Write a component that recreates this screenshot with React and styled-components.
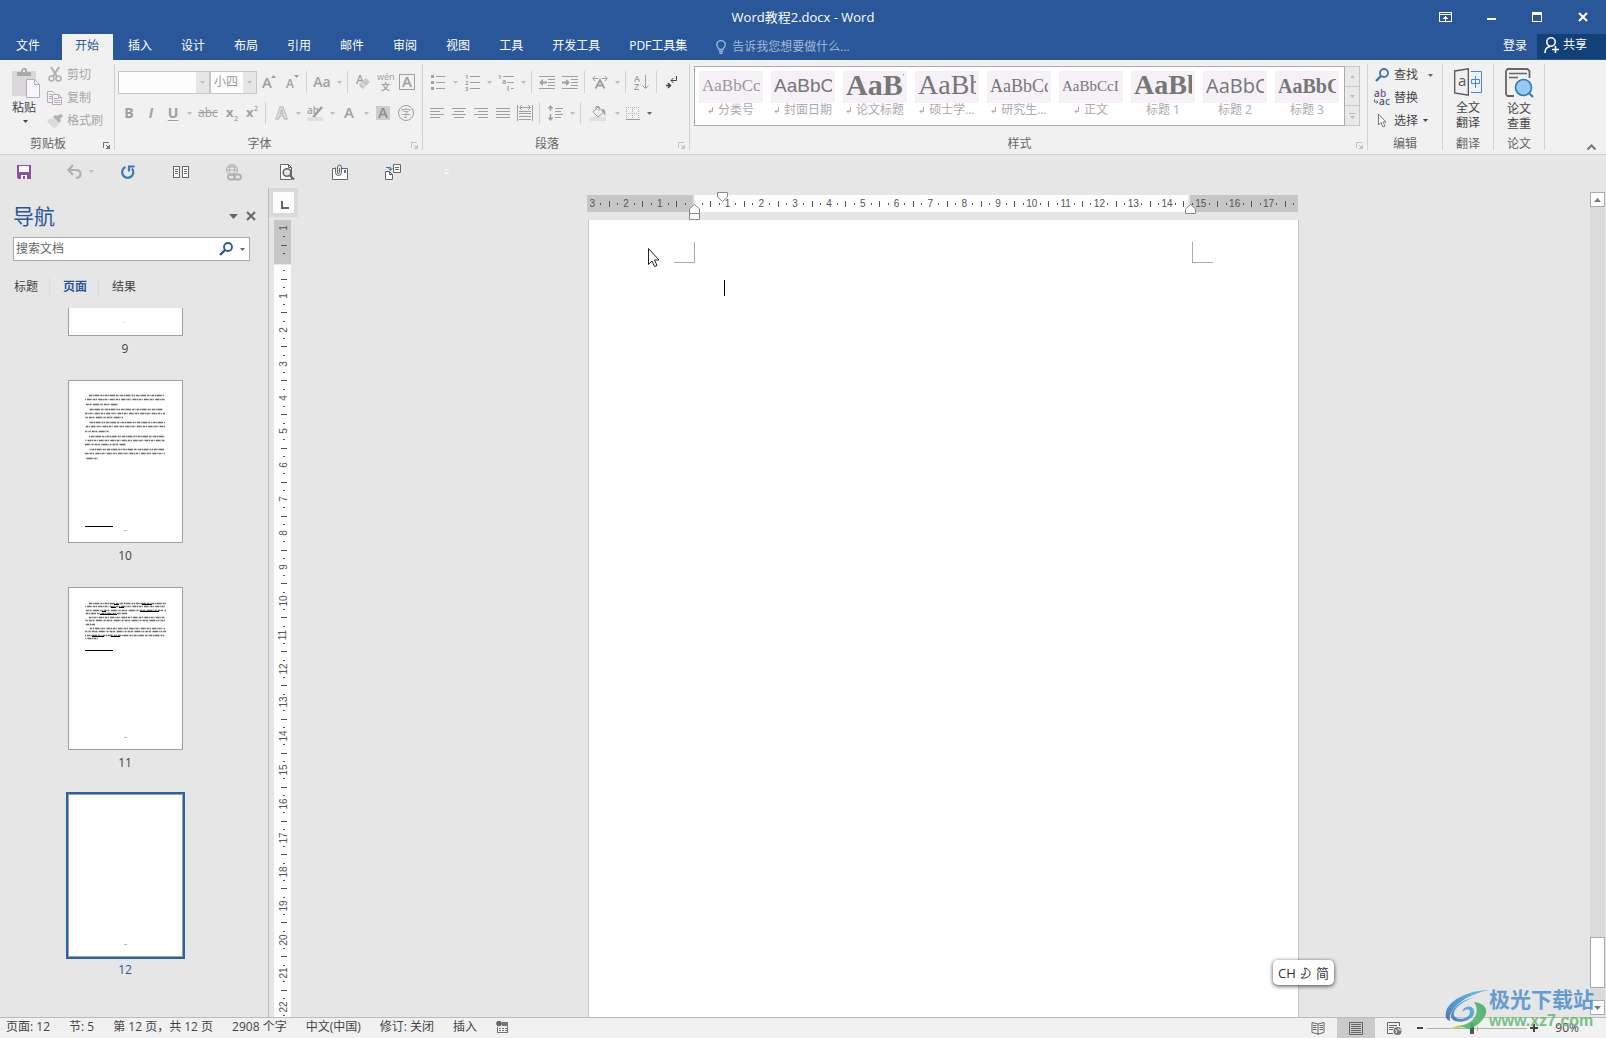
import React, { useState } from "react";
import styled, { createGlobalStyle } from "styled-components";

const GlobalStyle = createGlobalStyle`
  * {
    box-sizing: border-box;
  }

  body {
    margin: 0;
    background: #e6e6e6;
    color: #444;
    font-family: "Open Sans", "Noto Sans CJK SC", sans-serif;
    font-size: 12px;
    line-height: 16px;
  }

  button, input, select {
    margin: 0;
    padding: 0;
    border: none;
    background: none;
    color: inherit;
    font: inherit;
    outline: none;
  }

  svg {
    display: block;
    flex: none;
    overflow: visible;
  }
`;

const Window = styled.div`
  position: relative;
  display: flex;
  flex-direction: column;
  height: 100vh;
  overflow: hidden;
`;

/* ---------- title bar ---------- */

const TitleBar = styled.header`
  display: grid;
  grid-template-columns: 1fr auto 1fr;
  align-items: center;
  height: 34px;
  background: #2a579a;
  color: #fff;
`;

const Title = styled.h1`
  grid-column: 2;
  margin: 0;
  font-size: 13px;
  font-weight: 400;
`;

const WindowButtons = styled.div`
  display: flex;
  justify-content: flex-end;
`;

const WindowButton = styled.button`
  display: flex;
  align-items: center;
  justify-content: center;
  width: 46px;
  height: 32px;
`;

const TabBar = styled.nav`
  display: flex;
  height: 26px;
  background: #2a579a;
  color: #fff;
`;

const FileTab = styled.button`
  width: 62px;
  padding: 0 22px 2px 16px;
  text-align: left;
`;

const Tab = styled.button`
  padding: 0 14px 2px 13px;
  margin-right: 2px;
  white-space: nowrap;
  background: ${(props) => (props.$active ? "#f1f1f1" : "transparent")};
  color: ${(props) => (props.$active ? "#2a579a" : "#fff")};
`;

const TellMe = styled.label`
  display: flex;
  flex: 1;
  align-items: center;
  gap: 6px;
  padding-left: 13px;
`;

const TellMeInput = styled.input`
  flex: 1;
  min-width: 120px;

  &::placeholder {
    color: #a3b8d9;
    opacity: 1;
  }
`;

const LoginLink = styled.a`
  padding: 4px 10px 0 0;
  color: #fff;
  text-decoration: none;
`;

const ShareButton = styled.button`
  display: flex;
  align-items: center;
  gap: 4px;
  width: 69px;
  height: 25px;
  padding: 0 7px 3px;
  background: #124078;
`;

/* ---------- ribbon ---------- */

const Ribbon = styled.section`
  display: flex;
  height: 95px;
  padding: 4px 0;
  background: #f1f1f1;
  border-bottom: 1px solid #d2d2d2;
`;

const Group = styled.div`
  display: flex;
  flex: ${(props) => (props.$grow ? "1 1 0" : "none")};
  flex-direction: column;
  width: ${(props) => props.$width}px;
  min-width: 0;
  border-right: 1px solid #d2d2d2;
`;

const GroupBody = styled.div`
  display: flex;
  flex: 1;
  min-height: 0;
`;

const GroupFooter = styled.div`
  display: flex;
  align-items: center;
  height: 12px;
  color: #666;
`;

const GroupName = styled.span`
  flex: 1;
  text-align: center;
`;

const Launcher = styled.button`
  width: 18px;
  padding: 2px 0 0 7px;
  color: ${(props) => (props.$dim ? "#c3c3c3" : "#777")};
`;

const RibbonTail = styled.div`
  display: flex;
  align-items: flex-end;
  justify-content: flex-end;
  width: 61px;
  padding-right: 10px;
`;

const ToolRows = styled.div`
  display: flex;
  flex-direction: column;
  gap: 7px;
  padding: 6px 0 0 3px;
`;

const ToolRow = styled.div`
  display: flex;
  align-items: center;
  height: 24px;
`;

const ToolButton = styled.button`
  display: flex;
  align-items: center;
  justify-content: center;
  width: ${(props) => props.$width || 22}px;
  height: 24px;
  color: #a0a0a0;
`;

const Letter = styled.span`
  font-size: 14px;
  font-weight: ${(props) => (props.$light ? 600 : 700)};
  font-style: ${(props) => (props.$italic ? "italic" : "normal")};
  text-decoration: ${(props) => (props.$underline ? "underline" : "none")};
  text-underline-offset: 2px;
`;

const CaretButton = styled.button`
  display: flex;
  align-items: center;
  justify-content: center;
  width: 10px;
  height: 22px;
  color: ${(props) => (props.$dark ? "#666" : "#bdbdbd")};
`;

const Divider = styled.span`
  width: 1px;
  height: 22px;
  margin: 0 3px;
  background: #d2d2d2;
`;

const SelectBox = styled.span`
  position: relative;
  width: ${(props) => props.$width}px;
  height: 23px;

  svg {
    position: absolute;
    right: 5px;
    top: 10px;
    color: #bdbdbd;
    pointer-events: none;
  }
`;

const Select = styled.select`
  width: 100%;
  height: 100%;
  padding: 0 16px 0 3px;
  appearance: none;
  border: 1px solid #c6c6c6;
  border-radius: 0;
  background: linear-gradient(to left, #e6e6e6 13px, #fdfdfd 13px);
  color: #999;
`;

const PasteButton = styled.button`
  display: flex;
  flex-direction: column;
  align-items: center;
  width: 47px;
  padding: 4px 0 0 4px;
  color: #444;
`;

const PasteLabel = styled.span`
  margin: 2px 3px 4px 0;
`;

const CommandList = styled.div`
  display: flex;
  flex-direction: column;
`;

const EditList = styled(CommandList)`
  padding-left: 6px;
`;

const Command = styled.button`
  display: flex;
  align-items: center;
  gap: 5px;
  height: 23px;
  padding-bottom: 2px;
  color: ${(props) => (props.$dim ? "#a6a6a6" : "#444")};
  white-space: nowrap;
`;

const CommandRow = styled.div`
  display: flex;
  align-items: center;
  gap: 7px;
  height: 23px;
`;

const CommandIcon = styled.span`
  display: flex;
  justify-content: center;
  width: 15px;
`;

const BigButton = styled.button`
  display: flex;
  flex-direction: column;
  align-items: center;
  width: 100%;
  padding-top: 4px;
  line-height: 15px;

  svg {
    margin-bottom: 4px;
  }
`;

const GalleryWrap = styled.div`
  display: flex;
  flex: 1;
  height: 60px;
  margin: 2px 7px 0 4px;
  min-width: 0;
`;

const Gallery = styled.div`
  display: flex;
  flex: 1;
  min-width: 0;
  overflow: hidden;
  background: #fff;
  border: 1px solid #ababab;
`;

const StyleCard = styled.button`
  display: flex;
  flex: none;
  flex-direction: column;
  width: 72px;
  padding: 4px 4px 0;
`;

const Preview = styled.span`
  display: block;
  width: 64px;
  height: 32px;
  padding: 0 3px;
  background: #f5f1f7;
`;

const PreviewText = styled.span`
  display: block;
  overflow: hidden;
  color: ${(props) => (props.$light ? "#999" : "#777")};
  font-family: ${(props) => props.$family || '"Liberation Serif", serif'};
  font-size: ${(props) => props.$size}px;
  font-weight: ${(props) => props.$weight || 400};
  line-height: ${(props) => (props.$size > 24 ? 28 : 30)}px;
  text-align: left;
  white-space: nowrap;
`;

const StyleName = styled.span`
  display: flex;
  align-items: center;
  justify-content: center;
  gap: 4px;
  width: 64px;
  line-height: 14px;
  color: #ababab;
  white-space: nowrap;
`;

const GalleryScroll = styled.div`
  display: flex;
  flex-direction: column;
  width: 15px;
  border: 1px solid #c6c6c6;
  border-left: none;
`;

const GalleryScrollButton = styled.button`
  display: flex;
  flex: 1;
  align-items: center;
  justify-content: center;
  background: #e9e9e9;
  color: #bdbdbd;

  & + & {
    border-top: 1px solid #c6c6c6;
  }
`;

/* ---------- quick access ---------- */

const QuickAccess = styled.div`
  display: flex;
  align-items: center;
  gap: 29px;
  height: 33px;
  padding: 1px 0 0 12px;
`;

const QuickButton = styled.button`
  display: flex;
  align-items: center;
  justify-content: center;
  width: 24px;
  height: 24px;
  color: ${(props) => (props.$dim ? "#b0b0b0" : "#666")};
`;

const QuickPair = styled.div`
  display: flex;
  margin: 0 -9px 0 -3px;
`;

/* ---------- work area ---------- */

const Workspace = styled.main`
  display: flex;
  flex: 1;
  min-height: 0;
`;

const NavPane = styled.aside`
  display: flex;
  flex-direction: column;
  width: 269px;
  border-right: 1px solid #bababa;
`;

const NavHeader = styled.div`
  display: flex;
  align-items: center;
  gap: 8px;
  height: 49px;
  padding: 7px 12px 0 13px;
`;

const NavTitle = styled.h2`
  flex: 1;
  margin: 0;
  color: #2a579a;
  font-size: 21px;
  font-weight: 400;
  line-height: 28px;
`;

const SearchBox = styled.div`
  display: flex;
  align-items: center;
  gap: 4px;
  height: 24px;
  margin: 0 18px 0 13px;
  padding: 0 2px;
  background: #fff;
  border: 1px solid #ababab;
`;

const SearchInput = styled.input`
  flex: 1;
  min-width: 0;

  &::placeholder {
    color: #666;
    opacity: 1;
  }
`;

const NavTabs = styled.div`
  display: flex;
  padding: 16px 0 11px 1px;
`;

const NavTab = styled.button`
  height: 20px;
  padding: 0 11px 0 13px;
  border-right: 1px solid #dcdcdc;
  color: ${(props) => (props.$active ? "#2a579a" : "#444")};
  font-weight: ${(props) => (props.$active ? 700 : 400)};

  &:last-child {
    border-right: none;
  }
`;

const ThumbList = styled.div`
  flex: 1;
  min-height: 0;
  overflow: hidden;
  padding-right: 18px;
`;

const Thumb = styled.button`
  display: block;
  width: 100%;
  color: ${(props) => (props.$selected ? "#2a579a" : "#444")};

  svg {
    margin: 0 auto;
    background: #fff;
    border: 1px solid #9aa1a9;
    border-top-width: ${(props) => (props.$cut ? 0 : 1)}px;
    outline: ${(props) => (props.$selected ? "2px solid #2a63a0" : "none")};
  }
`;

const ThumbNumber = styled.span`
  display: block;
  height: 44px;
  line-height: 25px;
`;

const RulerColumn = styled.div`
  display: flex;
  flex-direction: column;
  width: 29px;
`;

const TabStop = styled.button`
  display: flex;
  align-items: center;
  justify-content: center;
  width: 29px;
  height: 29px;
  margin-bottom: 3px;
  padding: 4px 0 0 2px;
  background: #fdfdfd;
  border: 4px solid #d9d9d9;
`;

const VerticalRuler = styled.div`
  display: flex;
  flex: 1;
  flex-direction: column;
  width: 17px;
  min-height: 0;
  margin-left: 5px;
  padding: 4px 0 0 2px;
  overflow: hidden;
  background: linear-gradient(#c6c6c6 44px, #e6e6e6 44px, #e6e6e6 45px, #fff 45px);
`;

const VerticalScale = styled.div`
  display: flex;
  flex: 1;
  flex-direction: column;
  margin-bottom: -3px;
`;

const DocColumn = styled.div`
  display: flex;
  flex: 1;
  flex-direction: column;
  align-items: center;
  min-width: 0;
`;

const RulerRow = styled.div`
  width: 713px;
  height: 32px;
  padding: 7px 2px 0 0;
`;

const HorizontalRuler = styled.div`
  position: relative;
  display: flex;
  height: 17px;
  padding-left: 1px;
  background: linear-gradient(
    to right,
    #c6c6c6 106px,
    #e6e6e6 106px,
    #e6e6e6 108px,
    #fff 108px,
    #fff calc(100% - 110px),
    #e6e6e6 calc(100% - 110px),
    #e6e6e6 calc(100% - 108px),
    #c6c6c6 calc(100% - 108px)
  );
`;

const Unit = styled.div`
  display: flex;
  flex: ${(props) => (props.$last ? 2 : 4)} 1 0;
  flex-direction: ${(props) => (props.$vertical ? "column" : "row")};
  min-width: 0;
  min-height: 0;
`;

const Mark = styled.span`
  display: flex;
  flex: 1 1 0;
  align-items: center;
  justify-content: center;
  min-width: 0;
  min-height: 0;
  color: #555;
  font-family: "Liberation Sans", sans-serif;
  font-size: 10px;
  line-height: 8px;
`;

const Digits = styled.span`
  flex: none;
  transform: ${(props) => (props.$vertical ? "rotate(-90deg)" : "none")};
`;

const Tick = styled.i`
  flex: none;
  width: ${(props) => (props.$vertical ? props.$length : 1)}px;
  height: ${(props) => (props.$vertical ? 1 : props.$length)}px;
  background: #555;
`;

const Marker = styled.svg`
  position: absolute;
  left: ${(props) => props.$left}px;
  top: ${(props) => props.$top}px;
`;

const Page = styled.article`
  position: relative;
  flex: 1;
  width: 711px;
  background: #fff;
  border: solid #c6c6c6;
  border-width: 0 1px;
`;

const PageCorners = styled.div`
  display: flex;
  justify-content: space-between;
  padding: 22px 85px 0;
`;

const Corner = styled.span`
  width: 21px;
  height: 21px;
  border: solid #ababab;
  border-width: ${(props) => (props.$right ? "0 0 1px 1px" : "0 1px 1px 0")};
`;

const TextCaret = styled.div`
  width: 1px;
  height: 16px;
  margin: 17px 0 0 135px;
  background: #000;
`;

const Pointer = styled.svg`
  position: absolute;
  left: 58px;
  top: 27px;
`;

const ScrollBar = styled.div`
  display: flex;
  flex-direction: column;
  width: 17px;
  padding: 4px 1px 2px;
`;

const ScrollArrow = styled.button`
  display: flex;
  align-items: center;
  justify-content: center;
  height: 15px;
  background: #fff;
  border: 1px solid #ababab;
  color: #777;
`;

const ScrollTrack = styled.div`
  display: flex;
  flex: 1;
  flex-direction: column;
  justify-content: flex-end;
  padding-bottom: 12px;
  background: #dbdbdb;
`;

const ScrollThumb = styled.div`
  height: 51px;
  background: #fff;
  border: 1px solid #ababab;
`;

/* ---------- status bar ---------- */

const StatusBar = styled.footer`
  display: flex;
  align-items: stretch;
  justify-content: space-between;
  height: 21px;
  background: #f1f1f1;
  border-top: 1px solid #bdbdbd;
`;

const StatusInfo = styled.div`
  display: flex;
  align-items: center;
  gap: 19px;
  padding: 0 0 2px 6px;
  white-space: nowrap;
`;

const StatusRight = styled.div`
  display: flex;
  align-items: center;
  padding-right: 27px;
`;

const ViewButton = styled.button`
  display: flex;
  align-items: center;
  justify-content: center;
  width: 38px;
  height: 20px;
  background: ${(props) => (props.$active ? "#cacaca" : "transparent")};
`;

const ZoomButton = styled.button`
  display: flex;
  align-items: center;
  justify-content: center;
  width: 14px;
  height: 20px;
`;

const ZoomSlider = styled.input`
  width: 100px;
  height: 20px;
  appearance: none;
  background: linear-gradient(#b0b0b0, #b0b0b0) center / 100% 1px no-repeat,
    linear-gradient(#b0b0b0, #b0b0b0) center / 1px 5px no-repeat;

  &::-webkit-slider-thumb {
    appearance: none;
    width: 4px;
    height: 11px;
    background: #555;
  }
`;

const ZoomValue = styled.span`
  width: 38px;
  text-align: right;
`;

/* ---------- floating items ---------- */

const ImeBadge = styled.div`
  position: absolute;
  right: 272px;
  bottom: 53px;
  display: flex;
  align-items: center;
  justify-content: space-between;
  width: 61px;
  height: 25px;
  padding: 0 5px;
  background: #fff;
  border-radius: 5px;
  box-shadow: 0 1px 4px rgba(0, 0, 0, 0.75);
  color: #333;
  font-size: 13px;
`;

const SiteMark = styled.div`
  position: absolute;
  right: 12px;
  bottom: 7px;
  display: flex;
  align-items: center;
  opacity: 0.9;
  pointer-events: none;
`;

const SiteText = styled.div`
  display: flex;
  flex-direction: column;
  margin-left: -4px;
  white-space: nowrap;
`;

const SiteName = styled.strong`
  color: #5793cf;
  font-size: 21px;
  line-height: 23px;
`;

const SiteUrl = styled.strong`
  color: #69bd7c;
  font-family: "Liberation Sans", sans-serif;
  font-size: 16px;
  line-height: 20px;
`;

/* ---------- icons ---------- */

const Icon = ({ w = 16, h = 16, children, ...rest }) => (
  <svg
    width={w}
    height={h}
    viewBox={`0 0 ${w} ${h}`}
    fill="none"
    stroke="currentColor"
    aria-hidden="true"
    {...rest}
  >
    {children}
  </svg>
);

const Caret = () => (
  <Icon w={5} h={3} stroke="none">
    <path d="M0 0h5L2.500 3z" fill="currentColor" />
  </Icon>
);

const UpCaret = () => (
  <Icon w={5} h={3} stroke="none">
    <path d="M0 3h5L2.500 0z" fill="currentColor" />
  </Icon>
);

const LauncherIcon = () => (
  <Icon w={7} h={7} shapeRendering="crispEdges">
    <path d="M.5 6V.5H6" />
    <path d="M3 3l3 3M6.500 3v3.500H3" />
    <path d="M4 4h3v3H4z" fill="currentColor" stroke="none" />
  </Icon>
);

const ReturnMark = () => (
  <Icon w={6} h={7}>
    <path d="M4.500 0v4.500H1M3 2.500L1 4.500l2 2" />
  </Icon>
);

const Magnifier = ({ color = "#3f74b5" }) => (
  <Icon w={14} h={14} stroke={color}>
    <circle cx="9" cy="5" r="4" strokeWidth="1.800" />
    <path d="M6 8L1 13" strokeWidth="2.400" />
  </Icon>
);

// horizontal rules given as [x1, x2, y]
const Lines = ({ rows, w = 16, h = 16, children }) => (
  <Icon w={w} h={h} shapeRendering="crispEdges">
    {rows.map(([x1, x2, y]) => (
      <path key={`${x1}-${y}`} d={`M${x1} ${y}.5H${x2}`} />
    ))}
    {children}
  </Icon>
);

const SmallText = ({ x, y, size = 6, children, ...rest }) => (
  <text
    x={x}
    y={y}
    fontSize={size}
    fontFamily="Open Sans, Noto Sans CJK SC, sans-serif"
    fill="currentColor"
    stroke="none"
    {...rest}
  >
    {children}
  </text>
);

const PasteIcon = () => (
  <Icon w={28} h={30} stroke="none">
    <rect y="3" width="24" height="25" rx="1" fill="#dbd6dc" />
    <path d="M5 4h4V1.500h1L11 0h3l1 1.500V4h4v4H5z" fill="#a9a9a9" />
    <rect x="11" y="2" width="2" height="2" fill="#f1f1f1" />
    <path d="M14.500 11.500h8l5 5v13h-13z" fill="#f8f5fa" stroke="#b4adb7" />
    <path d="M22.500 11.500v5h5" stroke="#b4adb7" />
  </Icon>
);

const CutIcon = () => (
  <Icon w={14} h={15} stroke="#b0b0b0">
    <path d="M3 0l6 9.500M11 0L5 9.500" strokeWidth="2" />
    <circle cx="3.500" cy="11.500" r="2.500" strokeWidth="1.500" />
    <circle cx="10.500" cy="11.500" r="2.500" strokeWidth="1.500" />
  </Icon>
);

const CopyIcon = () => (
  <Icon w={15} h={14} stroke="#b4adb7">
    <path d="M5 11.500H.5V.5H6l2 2M2 3.500h3M2 5.500h3M2 7.500h3" />
    <path d="M5.500 3.500h6l3 3v7h-9z" fill="#f8f5fa" />
    <path d="M11.500 3.500v3h3M7 7.500h5M7 9.500h6M7 11.500h6" />
  </Icon>
);

const BrushIcon = () => (
  <Icon w={16} h={14} stroke="none">
    <path d="M10 2l4-2 2 2-3 3 1 2-2 2-6-6 2-2z" fill="#b0b0b0" />
    <path d="M0 6l6-2 6 6-4 4-3-1-1-2-2-1z" fill="#ddd8de" />
  </Icon>
);

const GrowIcon = () => (
  <Icon w={14} h={16}>
    <SmallText x="0" y="14" size="15" fontWeight="600">A</SmallText>
    <path d="M9 4l2.500-3L14 4z" fill="currentColor" stroke="none" />
  </Icon>
);

const ShrinkIcon = () => (
  <Icon w={13} h={16}>
    <SmallText x="0" y="14" size="12" fontWeight="600">A</SmallText>
    <path d="M8 1h5l-2.500 3z" fill="currentColor" stroke="none" />
  </Icon>
);

const EraserIcon = () => (
  <Icon w={16} h={16}>
    <SmallText x="1" y="10" size="12" fontWeight="600">A</SmallText>
    <path d="M4 10l7-6 4 4-7 7-3-2z" fill="#c9c9c9" stroke="none" />
    <path d="M6 8.500l4.500 4.500" stroke="#f1f1f1" />
  </Icon>
);

const PinyinIcon = () => (
  <Icon w={18} h={18}>
    <SmallText x="0" y="7" size="9">wén</SmallText>
    <SmallText x="4" y="17" size="9" fontWeight="600">文</SmallText>
  </Icon>
);

const BoxedA = () => (
  <Icon w={16} h={16} shapeRendering="crispEdges">
    <rect x=".5" y=".5" width="15" height="15" />
    <SmallText x="3" y="13" size="15" fontWeight="600">A</SmallText>
  </Icon>
);

const ShadedA = () => (
  <Icon w={14} h={14}>
    <rect width="14" height="14" fill="#cdcdcd" stroke="none" />
    <SmallText x="2" y="12" size="15" fontWeight="600" fill="#8f8f8f">A</SmallText>
  </Icon>
);

const CircledChar = () => (
  <Icon w={16} h={16}>
    <circle cx="8" cy="8" r="7.500" />
    <SmallText x="3" y="12" size="10">字</SmallText>
  </Icon>
);

const OutlineA = () => (
  <Icon w={13} h={15}>
    <SmallText x="1" y="13" size="16" fontWeight="700" fill="#f1f1f1" stroke="#b5b5b5">
      A
    </SmallText>
  </Icon>
);

const HighlightIcon = () => (
  <Icon w={16} h={16}>
    <SmallText x="0" y="9" size="10" fontWeight="600">ab</SmallText>
    <path d="M15 2L8 10" strokeWidth="2.500" />
    <path d="M8 8l-3 4h4z" fill="currentColor" stroke="none" />
    <rect y="12" width="16" height="4" fill="#e3dde4" stroke="none" />
  </Icon>
);

const BulletsIcon = () => (
  <Lines w={14} h={15} rows={[[5, 14, 1], [5, 14, 7], [5, 14, 13]]}>
    <path d="M0 0h3v3H0zM0 6h3v3H0zM0 12h3v3H0z" fill="currentColor" stroke="none" />
  </Lines>
);

const NumbersIcon = () => (
  <Lines w={15} h={17} rows={[[5, 15, 2], [5, 15, 8], [5, 15, 14]]}>
    <SmallText x="0" y="5" size="6" fontWeight="700">1</SmallText>
    <SmallText x="0" y="11" size="6" fontWeight="700">2</SmallText>
    <SmallText x="0" y="17" size="6" fontWeight="700">3</SmallText>
  </Lines>
);

const MultilevelIcon = () => (
  <Lines w={16} h={17} rows={[[5, 16, 2], [9, 16, 8], [13, 16, 14]]}>
    <SmallText x="0" y="5" size="6" fontWeight="700">1</SmallText>
    <SmallText x="4" y="10" size="7" fontWeight="700">a</SmallText>
    <SmallText x="9" y="17" size="7" fontWeight="700">i</SmallText>
  </Lines>
);

const IndentIcon = ({ out }) => (
  <Lines
    w={16}
    h={13}
    rows={[[0, 16, 0], [9, 16, 3], [9, 16, 6], [9, 16, 9], [0, 16, 12]]}
  >
    <path
      d={out ? "M0 6.500L4 3v2.500h4v2H4V10z" : "M8 6.500L4 3v2.500H0v2h4V10z"}
      fill="currentColor"
      stroke="none"
      shapeRendering="auto"
    />
  </Lines>
);

const CharScaleIcon = () => (
  <Icon w={16} h={14}>
    <path d="M3.500 13.500L8 5l4.500 8.500M5 10.500h6" strokeWidth="1.800" />
    <path d="M1 3.500h5M3 1L.8 3.500 3 6M10 3.500h5M13 1l2.200 2.500L13 6" />
  </Icon>
);

const SortIcon = () => (
  <Icon w={15} h={17}>
    <SmallText x="0" y="8" size="9" fontWeight="600">A</SmallText>
    <SmallText x="0" y="16" size="9" fontWeight="600">Z</SmallText>
    <path d="M11.500 1v13M8.500 11.500l3 3 3-3" />
  </Icon>
);

const MarksIcon = () => (
  <Icon w={12} h={13} stroke="#444">
    <path d="M10.500 0v4.500H5M7.500 2L5 4.500 7.500 7" />
    <path d="M0 9.500h4M2 7l2.500 2.500L2 12" strokeWidth="1.500" />
  </Icon>
);

const alignRows = {
  左对齐: [[0, 14, 1], [0, 10, 4], [0, 14, 7], [0, 10, 10]],
  居中: [[0, 14, 1], [2, 12, 4], [0, 14, 7], [2, 12, 10]],
  右对齐: [[0, 14, 1], [4, 14, 4], [0, 14, 7], [4, 14, 10]],
  两端对齐: [[0, 14, 1], [0, 14, 4], [0, 14, 7], [0, 14, 10]],
};

const DistributeIcon = () => (
  <Lines w={16} h={16} rows={[[2, 14, 6], [2, 14, 8], [2, 14, 11], [2, 14, 14]]}>
    <path d="M.5 0v16M15.500 0v16" />
    <path d="M3 2.500h10M5 0L2.500 2.500 5 5M11 0l2.500 2.500L11 5" shapeRendering="auto" />
  </Lines>
);

const LineSpaceIcon = () => (
  <Lines w={15} h={16} rows={[[7, 15, 3], [7, 13, 6], [7, 15, 9], [7, 13, 12]]}>
    <path
      d="M2.500 1v5M.5 3.500l2-2.500 2 2.500M2.500 9v6M.5 12.500l2 2.500 2-2.500"
      strokeWidth="1.400"
      shapeRendering="auto"
    />
  </Lines>
);

const BucketIcon = () => (
  <Icon w={16} h={16}>
    <path d="M3 7l5-5 6 5-6 5z" />
    <path d="M6 5V1.500h3V6" />
    <path d="M12 4c3 0 4 3 3 7-1-2-2-4-3-4z" fill="currentColor" stroke="none" />
    <rect y="12" width="16" height="4" fill="#e3dde4" stroke="none" />
  </Icon>
);

const BordersIcon = () => (
  <Icon w={14} h={13} shapeRendering="crispEdges" stroke="#b9adbb">
    <path d="M0 .5h13M0 6.500h13M.5 0v12M6.500 0v12M12.500 0v12" strokeDasharray="1 1" />
    <path d="M0 12.500h14" stroke="#999" />
  </Icon>
);

const ReplaceIcon = () => (
  <Icon w={16} h={16}>
    <SmallText x="0" y="7" size="10" fontWeight="600" fill="#555">a</SmallText>
    <SmallText x="6" y="7" size="10" fontWeight="600" fill="#8a50a8">b</SmallText>
    <SmallText x="5" y="15" size="10" fontWeight="600" fill="#555">a</SmallText>
    <SmallText x="11" y="15" size="10" fontWeight="600" fill="#3f74b5">c</SmallText>
    <path d="M.5 9v3H4M2.500 10.500L4 12l-1.500 1.500" stroke="#3f74b5" />
  </Icon>
);

const SelectIcon = () => (
  <Icon w={10} h={15} stroke="#777">
    <path d="M1.500 1v11l2.500-2.500 2 4.500 2-1-2-4H9z" fill="#fff" />
  </Icon>
);

const TranslateIcon = () => (
  <Icon w={28} h={28}>
    <path d="M.7 3L14.300.8v26.400L.7 25z" stroke="#555" strokeWidth="1.300" />
    <SmallText x="4" y="18" size="15" fill="#555">a</SmallText>
    <path d="M17 3.500h10.500v21H17" stroke="#4a86d8" />
    <path d="M17.500 11.500h8v4h-8zM21.500 8v12" stroke="#4a86d8" />
  </Icon>
);

const ThesisIcon = () => (
  <Icon w={28} h={29}>
    <path d="M24.500 10V3L22.500 1h-20l-1.500 2v23l1.500 2H9" stroke="#666" strokeWidth="1.800" />
    <path d="M4 5.500h18M4 9.500h9" stroke="#666" strokeWidth="1.500" />
    <circle cx="18.500" cy="19.500" r="8" fill="#98c8f8" stroke="#2f7dae" strokeWidth="1.600" />
    <path d="M24 25l4 4" stroke="#2f7dae" strokeWidth="2.200" />
  </Icon>
);

const SaveIcon = () => (
  <Icon w={14} h={14} stroke="none" shapeRendering="crispEdges">
    <path d="M0 0h14v14H1l-1-1z" fill="#8a50a8" />
    <path d="M2 1h10v6H2zM4 10h6v4H8v-3H6v3H4z" fill="#fff" />
  </Icon>
);

const UndoIcon = () => (
  <Icon w={15} h={14}>
    <path d="M1.500 5H9c6 0 6 7.500 0 8" strokeWidth="2.200" />
    <path d="M6 0L1.500 5 6 10" strokeWidth="2.200" />
  </Icon>
);

const RedoIcon = () => (
  <Icon w={14} h={14} stroke="#3d7ab8" strokeWidth="2.200">
    <path d="M4.500 2a5.600 5.600 0 1 0 6.500 1.500" />
    <path d="M8 6.500V1.500h5.500" />
  </Icon>
);

const ColumnsIcon = () => (
  <Icon w={17} h={12} shapeRendering="crispEdges">
    <path d="M.5.5h6v11h-6zM9.500.5h6v11h-6z" fill="#fff" />
    <path d="M2 3.500h3M2 5.500h3M2 7.500h3M11 3.500h3M11 5.500h3M11 7.500h3" />
  </Icon>
);

const WebLinkIcon = () => (
  <Icon w={16} h={17}>
    <circle cx="6" cy="6" r="5.500" />
    <path d="M.5 6h11M1.500 3h9M6 .5C2.500 3 2.500 9 6 11.500M6 .5c3.500 2.500 3.500 8.500 0 11" />
    <rect x="2" y="10.500" width="7" height="5" rx="2.500" strokeWidth="1.800" />
    <rect x="8" y="10.500" width="7" height="5" rx="2.500" strokeWidth="1.800" />
  </Icon>
);

const PreviewIcon = () => (
  <Icon w={15} h={16}>
    <path d="M.5.5h8l3 3v12H.5z" fill="#fff" />
    <path d="M8.500.5v3h3" />
    <circle cx="7" cy="8.500" r="3.800" fill="#e6e6e6" strokeWidth="1.600" />
    <path d="M10 11.500l4 4" strokeWidth="2.200" />
  </Icon>
);

const AttachIcon = () => (
  <Icon w={16} h={15}>
    <path d="M.5 3.500h15v11H.5z" fill="#fff" />
    <path d="M3.500 2.500v5a3 3 0 0 0 6 0V2a2 2 0 0 0-4 0v5.500a1 1 0 0 0 2 0V3" fill="#e6e6e6" />
    <path d="M12 5h2v3h-2z" fill="#3d7ab8" stroke="none" />
  </Icon>
);

const FormIcon = () => (
  <Icon w={16} h={16}>
    <path d="M.5 7.500h4l3 3v5h-7zM4.500 7.500v3h3" fill="#fff" />
    <path d="M8.500.5h7v8h-7zM10 3.500h4M10 5.500h4" fill="#fff" />
    <path d="M1 3.500h4.500V6M3.500 4l2 2.500 2-2.500" stroke="#3d7ab8" />
  </Icon>
);

const BulbIcon = () => (
  <Icon w={10} h={14} stroke="#a3b8d9" strokeWidth="1.300">
    <path d="M3 9.500C3 8 .8 7.500.8 4.800a4.200 4.200 0 0 1 8.400 0C9.200 7.500 7 8 7 9.500zM3 11.500h4M3.500 13.300h3" />
  </Icon>
);

const PersonIcon = () => (
  <Icon w={15} h={16} strokeWidth="1.600">
    <circle cx="7" cy="5" r="4.200" />
    <path d="M1 16c0-4 2-6 5-6.500M11.500 9v7M8 12.500h7" />
  </Icon>
);

const ReadIcon = () => (
  <Icon w={14} h={13} stroke="#666">
    <path d="M7 2L1 .5v10L7 12l6-1.500V.5zM7 2v11" />
    <path d="M2 3.500h3.500M2 5.500h3.500M2 7.500h3.500M8.500 3.500H12M8.500 5.500H12M8.500 7.500H12" />
  </Icon>
);

const PrintIcon = () => (
  <Icon w={14} h={13} stroke="#666" shapeRendering="crispEdges">
    <path d="M.5.5h13v12H.5zM2 2.500h10M2 4.500h10M2 6.500h10M2 8.500h10M2 10.500h10" />
  </Icon>
);

const WebIcon = () => (
  <Icon w={15} h={13} stroke="#666">
    <path d="M6 11.500H.5V.5h12V4M2 3.500h8M2 5.500h5M2 7.500h4" />
    <circle cx="10.500" cy="9" r="4" fill="#777" stroke="none" />
    <path d="M8 8l2 1-1 2M11 6l1 2 2 0" stroke="#f1f1f1" />
  </Icon>
);

const MacroIcon = () => (
  <Icon w={12} h={12} stroke="#777" shapeRendering="crispEdges">
    <path d="M1.500 6v5.500h10v-10H6" />
    <path d="M3 7.500h8M3 9.500h8" strokeDasharray="2 1" />
    <path d="M6 1h6v4H6z" fill="#777" stroke="none" />
    <circle cx="3" cy="2.500" r="2.800" fill="#666" stroke="none" shapeRendering="auto" />
  </Icon>
);

const MoonIcon = () => (
  <Icon w={11} h={12}>
    <path d="M4.500 1c4 .8 6 3.500 5.500 6-.7 3-4.500 4.800-8.800 4C4.500 9.500 6.500 5.500 4.500 1z" />
    <path d="M1 7c2 .8 3.500.5 4.500-.8" />
  </Icon>
);

const SiteLogo = () => (
  <Icon w={48} h={40} stroke="none">
    <defs>
      <linearGradient id="sky" x1="0" y1="1" x2="1" y2="0">
        <stop offset="0" stopColor="#3a6fb8" />
        <stop offset="1" stopColor="#58c4ea" />
      </linearGradient>
      <linearGradient id="leaf" x1="0" y1="1" x2="1" y2="0">
        <stop offset="0" stopColor="#f0dc38" />
        <stop offset=".45" stopColor="#5fba6c" />
        <stop offset="1" stopColor="#3fa86a" />
      </linearGradient>
    </defs>
    <path d="M44 0C26 0 4 9 1 22c-1 4 0 8 4 9C3 20 17 6 44 0z" fill="url(#sky)" />
    <path d="M30 7C15 12 5 22 10 27c5 4 15 1 15-5 0-4-5-3-8 0 1-6 10-8 12-2 2 8-10 14-19 11C0 27 10 11 30 7z" fill="url(#sky)" />
    <path d="M29 12c9 1 15 6 11 14-4 7-12 10-20 11L5 39c4-3 9-4 13-4 11-3 18-13 11-23z" fill="url(#leaf)" />
    <path d="M15 36c9-1 18-5 25-11-3 8-10 12-16 14z" fill="#4fb36a" />
  </Icon>
);

/* ---------- data ---------- */

const tabs = [
  "开始", "插入", "设计", "布局", "引用", "邮件", "审阅", "视图", "工具", "开发工具", "PDF工具集",
];

const sans = '"Liberation Sans", sans-serif';

const styleCards = [
  { name: "分类号", mark: true, size: 17, light: true },
  { name: "封面日期", mark: true, size: 19, family: sans },
  { name: "论文标题", mark: true, size: 30, weight: 700 },
  { name: "硕士学...", mark: true, size: 28 },
  { name: "研究生...", mark: true, size: 18 },
  { name: "正文", mark: true, size: 15, sample: "AaBbCcI" },
  { name: "标题 1", size: 28, weight: 700 },
  { name: "标题 2", size: 20, family: '"Open Sans", sans-serif' },
  { name: "标题 3", size: 20, weight: 700 },
];

// text rows of the page thumbnails: [start, end, y]
const pageTen = [
  [21, 96, 15], [17, 97, 19], [17, 50, 24], [21, 95, 29], [17, 97, 33],
  [17, 55, 37], [21, 97, 42], [17, 97, 46], [17, 41, 51], [21, 97, 56],
  [17, 97, 60], [17, 58, 64], [21, 97, 69], [17, 97, 73], [17, 30, 78],
];

const pageEleven = [
  [21, 98, 16], [17, 97, 19], [17, 98, 23], [17, 60, 26], [21, 97, 30],
  [17, 97, 33], [17, 27, 37], [21, 97, 41], [17, 98, 44], [17, 97, 48], [17, 30, 51],
];

const pageElevenLinks = [
  [46, 51, 17], [74, 84, 17], [43, 48, 20], [51, 56, 20], [34, 38, 24],
  [72, 91, 24], [32, 49, 27], [24, 36, 49], [43, 52, 49],
];

// word lengths of the miniature text, one pattern per row in turn
const wordDashes = [
  "3 .6 1.200 .5 5 1 2 .5 1 .8",
  "1 .7 2.400 .6 1 1.200 4 .5",
  "6 .8 1 .5 1.600 1 3 .6 2 1.400",
];

const thumbs = [
  { number: 9, height: 28, rows: [], mark: 14 },
  { number: 10, height: 163, rows: pageTen, note: 146, mark: 150 },
  { number: 11, height: 163, rows: pageEleven, links: pageElevenLinks, note: 63, mark: 150 },
  { number: 12, height: 163, rows: [], mark: 150 },
];

const horizontalUnits = Array.from({ length: 21 }, (_, i) => i - 3);
const verticalUnits = Array.from({ length: 24 }, (_, i) => i - 1);

/* ---------- parts ---------- */

const Tool = ({ name, width, children }) => (
  <ToolButton $width={width} aria-label={name}>{children}</ToolButton>
);

const Drop = ({ name, dark }) => (
  <CaretButton $dark={dark} aria-label={`${name} 选项`}><Caret /></CaretButton>
);

const RibbonGroup = ({ name, width, grow, launcher, dim, children }) => (
  <Group $width={width} $grow={grow}>
    <GroupBody>{children}</GroupBody>
    <GroupFooter>
      <GroupName>{name}</GroupName>
      {launcher && (
        <Launcher $dim={dim} aria-label={`${name} 设置`}><LauncherIcon /></Launcher>
      )}
    </GroupFooter>
  </Group>
);

const EditCommands = () => (
  <EditList>
    <CommandRow>
      <Command><CommandIcon><Magnifier /></CommandIcon>查找</Command>
      <Drop name="查找" dark />
    </CommandRow>
    <Command><CommandIcon><ReplaceIcon /></CommandIcon>替换</Command>
    <Command><CommandIcon><SelectIcon /></CommandIcon>选择<Caret /></Command>
  </EditList>
);

const RulerUnit = ({ value, vertical, last }) => (
  <Unit $vertical={vertical} $last={last}>
    <Mark>{value !== 0 && <Digits $vertical={vertical}>{Math.abs(value)}</Digits>}</Mark>
    <Mark><Tick $vertical={vertical} $length={2} /></Mark>
    {!last && <Mark><Tick $vertical={vertical} $length={6} /></Mark>}
    {!last && <Mark><Tick $vertical={vertical} $length={2} /></Mark>}
  </Unit>
);

const PageThumb = ({ page, selected, onClick }) => (
  <Thumb $selected={selected} $cut={page.height < 100} onClick={onClick}>
    <svg width="115" height={page.height} viewBox={`1 1 113 ${page.height - 2}`}>
      {page.rows.map(([x1, x2, y], i) => (
        <path
          key={y}
          d={`M${x1} ${y}.5H${x2}`}
          stroke="#333"
          strokeWidth="1.400"
          strokeDasharray={wordDashes[i % 3]}
          strokeDashoffset={i * 5}
          opacity=".7"
        />
      ))}
      {(page.links || []).map(([x1, x2, y]) => (
        <path key={`${x1}-${y}`} d={`M${x1} ${y}.5H${x2}`} stroke="#000" />
      ))}
      {page.note && <path d={`M17 ${page.note}.5h28`} stroke="#000" />}
      <path d={`M56 ${page.mark}.5h${page.height < 100 ? 1 : 3}`} stroke="#bbb" />
    </svg>
    <ThumbNumber>{page.number}</ThumbNumber>
  </Thumb>
);

const App = () => {
  const [activeTab, setActiveTab] = useState("开始");
  const [page, setPage] = useState(12);
  const [zoom, setZoom] = useState(45);

  return (
    <Window>
      <GlobalStyle />
      <TitleBar>
        <Title>Word教程2.docx - Word</Title>
        <WindowButtons>
          <WindowButton aria-label="功能区显示选项">
            <Icon w={13} h={10} shapeRendering="crispEdges">
              <path d="M.5.5h12v9H.5zM0 2.500h13M6.500 4v5M4 6.500h5M5 5.500h3" />
            </Icon>
          </WindowButton>
          <WindowButton aria-label="最小化">
            <Icon w={9} h={6} strokeWidth="2"><path d="M0 5h9" /></Icon>
          </WindowButton>
          <WindowButton aria-label="最大化">
            <Icon w={10} h={10} shapeRendering="crispEdges">
              <path d="M.5.5h9v9h-9zM0 1.500h10M0 2.500h10" />
            </Icon>
          </WindowButton>
          <WindowButton aria-label="关闭">
            <Icon w={10} h={10} strokeWidth="2"><path d="M1 1l8 8M9 1L1 9" /></Icon>
          </WindowButton>
        </WindowButtons>
      </TitleBar>

      <TabBar>
        <FileTab>文件</FileTab>
        {tabs.map((tab) => (
          <Tab key={tab} $active={tab === activeTab} onClick={() => setActiveTab(tab)}>
            {tab}
          </Tab>
        ))}
        <TellMe>
          <BulbIcon />
          <TellMeInput aria-label="告诉我您想要做什么" placeholder="告诉我您想要做什么..." />
        </TellMe>
        <LoginLink href="#login">登录</LoginLink>
        <ShareButton><PersonIcon />共享</ShareButton>
      </TabBar>

      <Ribbon>
        <RibbonGroup name="剪贴板" width={115} launcher>
          <PasteButton>
            <PasteIcon />
            <PasteLabel>粘贴</PasteLabel>
            <Caret />
          </PasteButton>
          <CommandList>
            <Command $dim><CommandIcon><CutIcon /></CommandIcon>剪切</Command>
            <Command $dim><CommandIcon><CopyIcon /></CommandIcon>复制</Command>
            <Command $dim><CommandIcon><BrushIcon /></CommandIcon>格式刷</Command>
          </CommandList>
        </RibbonGroup>

        <RibbonGroup name="字体" width={308} launcher dim>
          <ToolRows>
            <ToolRow>
              <SelectBox $width={92}>
                <Select aria-label="字体" defaultValue="">
                  <option value=""></option>
                  <option>宋体</option>
                </Select>
                <Caret />
              </SelectBox>
              <SelectBox $width={47}>
                <Select aria-label="字号" defaultValue="小四">
                  <option>小四</option>
                  <option>五号</option>
                </Select>
                <Caret />
              </SelectBox>
              <Tool name="增大字号" width={24}><GrowIcon /></Tool>
              <Tool name="减小字号" width={22}><ShrinkIcon /></Tool>
              <Divider />
              <Tool name="更改大小写" width={24}><Letter $light>Aa</Letter></Tool>
              <Drop name="更改大小写" />
              <Divider />
              <Tool name="清除格式" width={24}><EraserIcon /></Tool>
              <Tool name="拼音指南"><PinyinIcon /></Tool>
              <Tool name="字符边框" width={20}><BoxedA /></Tool>
            </ToolRow>
            <ToolRow>
              <Tool name="加粗"><Letter>B</Letter></Tool>
              <Tool name="倾斜"><Letter $italic>I</Letter></Tool>
              <Tool name="下划线"><Letter $underline>U</Letter></Tool>
              <Drop name="下划线" />
              <Tool name="删除线" width={28}><s>abc</s></Tool>
              <Tool name="下标" width={20}>
                <Icon w={13} h={14}>
                  <SmallText x="0" y="11" size="13" fontWeight="700">x</SmallText>
                  <SmallText x="8" y="15" size="7" fontWeight="600">2</SmallText>
                </Icon>
              </Tool>
              <Tool name="上标" width={20}>
                <Icon w={13} h={14}>
                  <SmallText x="0" y="11" size="13" fontWeight="700">x</SmallText>
                  <SmallText x="8" y="5" size="7" fontWeight="600">2</SmallText>
                </Icon>
              </Tool>
              <Divider />
              <Tool name="文本效果" width={24}><OutlineA /></Tool>
              <Drop name="文本效果" />
              <Tool name="突出显示" width={24}><HighlightIcon /></Tool>
              <Drop name="突出显示" />
              <Tool name="字体颜色" width={24}>
                <Icon w={10} h={14}>
                  <SmallText x="0" y="12" size="15" fontWeight="600">A</SmallText>
                </Icon>
              </Tool>
              <Drop name="字体颜色" />
              <Tool name="字符底纹" width={24}><ShadedA /></Tool>
              <Tool name="带圈字符"><CircledChar /></Tool>
            </ToolRow>
          </ToolRows>
        </RibbonGroup>

        <RibbonGroup name="段落" width={267} launcher dim>
          <ToolRows>
            <ToolRow>
              <Tool name="项目符号" width={24}><BulletsIcon /></Tool>
              <Drop name="项目符号" />
              <Tool name="编号" width={24}><NumbersIcon /></Tool>
              <Drop name="编号" />
              <Tool name="多级列表" width={24}><MultilevelIcon /></Tool>
              <Drop name="多级列表" />
              <Divider />
              <Tool name="减少缩进量" width={24}><IndentIcon out /></Tool>
              <Tool name="增加缩进量"><IndentIcon /></Tool>
              <Divider />
              <Tool name="中文版式" width={24}><CharScaleIcon /></Tool>
              <Drop name="中文版式" />
              <Divider />
              <Tool name="排序" width={24}><SortIcon /></Tool>
              <Divider />
              <Tool name="显示编辑标记" width={24}><MarksIcon /></Tool>
            </ToolRow>
            <ToolRow>
              {Object.keys(alignRows).map((name) => (
                <Tool key={name} name={name}>
                  <Lines w={14} h={12} rows={alignRows[name]} />
                </Tool>
              ))}
              <Tool name="分散对齐"><DistributeIcon /></Tool>
              <Divider />
              <Tool name="行距" width={24}><LineSpaceIcon /></Tool>
              <Drop name="行距" />
              <Divider />
              <Tool name="底纹" width={28}><BucketIcon /></Tool>
              <Drop name="底纹" />
              <Tool name="边框"><BordersIcon /></Tool>
              <Drop name="边框" dark />
            </ToolRow>
          </ToolRows>
        </RibbonGroup>

        <RibbonGroup name="样式" grow launcher dim>
          <GalleryWrap>
            <Gallery>
              {styleCards.map((card) => (
                <StyleCard key={card.name}>
                  <Preview>
                    <PreviewText
                      $size={card.size}
                      $family={card.family}
                      $weight={card.weight}
                      $light={card.light}
                    >
                      {card.sample || "AaBbCc"}
                    </PreviewText>
                  </Preview>
                  <StyleName>
                    {card.mark && <ReturnMark />}
                    {card.name}
                  </StyleName>
                </StyleCard>
              ))}
            </Gallery>
            <GalleryScroll>
              <GalleryScrollButton aria-label="上一行"><UpCaret /></GalleryScrollButton>
              <GalleryScrollButton aria-label="下一行"><Caret /></GalleryScrollButton>
              <GalleryScrollButton aria-label="其他样式">
                <Icon w={7} h={6}>
                  <path d="M0 .5h7" />
                  <path d="M1 3h5L3.500 6z" fill="currentColor" stroke="none" />
                </Icon>
              </GalleryScrollButton>
            </GalleryScroll>
          </GalleryWrap>
        </RibbonGroup>

        <RibbonGroup name="编辑" width={75}>
          <EditCommands />
        </RibbonGroup>

        <RibbonGroup name="翻译" width={51}>
          <BigButton><TranslateIcon />全文<br />翻译</BigButton>
        </RibbonGroup>
        <RibbonGroup name="论文" width={51}>
          <BigButton><ThesisIcon />论文<br />查重</BigButton>
        </RibbonGroup>
        <RibbonTail>
          <button aria-label="折叠功能区">
            <Icon w={9} h={6} stroke="#777" strokeWidth="2"><path d="M.5 5.500l4-4 4 4" /></Icon>
          </button>
        </RibbonTail>
      </Ribbon>

      <QuickAccess>
        <QuickButton aria-label="保存"><SaveIcon /></QuickButton>
        <QuickPair>
          <QuickButton $dim aria-label="撤消"><UndoIcon /></QuickButton>
          <Drop name="撤消" />
        </QuickPair>
        <QuickButton aria-label="重复"><RedoIcon /></QuickButton>
        <QuickButton aria-label="分栏"><ColumnsIcon /></QuickButton>
        <QuickButton $dim aria-label="超链接"><WebLinkIcon /></QuickButton>
        <QuickButton aria-label="打印预览"><PreviewIcon /></QuickButton>
        <QuickButton aria-label="作为附件发送"><AttachIcon /></QuickButton>
        <QuickButton aria-label="插入域"><FormIcon /></QuickButton>
        <QuickButton aria-label="自定义快速访问工具栏">
          <Icon w={5} h={6} stroke="#f8f8f8">
            <path d="M0 .5h5" />
            <path d="M0 3h5L2.500 6z" fill="#f8f8f8" stroke="none" />
          </Icon>
        </QuickButton>
      </QuickAccess>

      <Workspace>
        <NavPane>
          <NavHeader>
            <NavTitle>导航</NavTitle>
            <button aria-label="任务窗格选项">
              <Icon w={9} h={5} stroke="none"><path d="M0 0h9L4.500 5z" fill="#666" /></Icon>
            </button>
            <button aria-label="关闭导航">
              <Icon w={10} h={10} stroke="#666" strokeWidth="2">
                <path d="M1 1l8 8M9 1L1 9" />
              </Icon>
            </button>
          </NavHeader>
          <SearchBox>
            <SearchInput aria-label="搜索文档" placeholder="搜索文档" />
            <button aria-label="搜索"><Magnifier color="#2a579a" /></button>
            <Drop name="搜索" dark />
          </SearchBox>
          <NavTabs>
            <NavTab>标题</NavTab>
            <NavTab $active>页面</NavTab>
            <NavTab>结果</NavTab>
          </NavTabs>
          <ThumbList>
            {thumbs.map((item) => (
              <PageThumb
                key={item.number}
                page={item}
                selected={item.number === page}
                onClick={() => setPage(item.number)}
              />
            ))}
          </ThumbList>
        </NavPane>

        <RulerColumn>
          <TabStop aria-label="制表符">
            <Icon w={8} h={8} stroke="#666" strokeWidth="2"><path d="M1 0v7h7" /></Icon>
          </TabStop>
          <VerticalRuler>
            <VerticalScale>
              {verticalUnits.map((value) => (
                <RulerUnit key={value} value={value} vertical last={value === 22} />
              ))}
            </VerticalScale>
          </VerticalRuler>
        </RulerColumn>

        <DocColumn>
          <RulerRow>
            <HorizontalRuler>
              {horizontalUnits.map((value) => (
                <RulerUnit key={value} value={value} />
              ))}
              <Marker $left={130} $top={-3} width="11" height="10" fill="#fff" stroke="#888">
                <path d="M.5.5h10V5l-5 4.500L.5 5z" />
              </Marker>
              <Marker $left={102} $top={9} width="11" height="16" fill="#fff" stroke="#888">
                <path d="M5.500.5l5 4.500v10.500H.5V5zM.5 9.500h10" />
              </Marker>
              <Marker $left={598} $top={9} width="11" height="10" fill="#fff" stroke="#888">
                <path d="M5.500.5l5 4.500v4.500H.5V5z" />
              </Marker>
            </HorizontalRuler>
          </RulerRow>
          <Page>
            <PageCorners>
              <Corner />
              <Corner $right />
            </PageCorners>
            <TextCaret />
            <Pointer width="14" height="21" fill="#fff" stroke="#223">
              <path d="M1.500 1.500v16l3.500-3.500 2.500 5.500 2.500-1-2.500-5.500h4.500z" />
            </Pointer>
          </Page>
        </DocColumn>

        <ScrollBar>
          <ScrollArrow aria-label="向上滚动">
            <Icon w={7} h={4} stroke="none"><path d="M0 4h7L3.500 0z" fill="#777" /></Icon>
          </ScrollArrow>
          <ScrollTrack><ScrollThumb /></ScrollTrack>
          <ScrollArrow aria-label="向下滚动">
            <Icon w={7} h={4} stroke="none"><path d="M0 0h7L3.500 4z" fill="#777" /></Icon>
          </ScrollArrow>
        </ScrollBar>
      </Workspace>

      <StatusBar>
        <StatusInfo>
          <span>页面: {page}</span>
          <span>节: 5</span>
          <span>第 {page} 页，共 12 页</span>
          <span>2908 个字</span>
          <span>中文(中国)</span>
          <span>修订: 关闭</span>
          <span>插入</span>
          <MacroIcon />
        </StatusInfo>
        <StatusRight>
          <ViewButton aria-label="阅读视图"><ReadIcon /></ViewButton>
          <ViewButton $active aria-label="页面视图"><PrintIcon /></ViewButton>
          <ViewButton aria-label="Web 版式视图"><WebIcon /></ViewButton>
          <ZoomButton aria-label="缩小" onClick={() => setZoom(zoom - 5)}>
            <Icon w={6} h={2} strokeWidth="2"><path d="M0 1h6" /></Icon>
          </ZoomButton>
          <ZoomSlider
            type="range"
            aria-label="显示比例"
            min="0"
            max="100"
            value={zoom}
            onChange={(e) => setZoom(Number(e.target.value))}
          />
          <ZoomButton aria-label="放大" onClick={() => setZoom(zoom + 5)}>
            <Icon w={8} h={8} strokeWidth="2"><path d="M0 4h8M4 0v8" /></Icon>
          </ZoomButton>
          <ZoomValue>{zoom * 2}%</ZoomValue>
        </StatusRight>
      </StatusBar>

      <ImeBadge>
        <span>CH</span>
        <MoonIcon />
        <span>简</span>
      </ImeBadge>

      <SiteMark>
        <SiteLogo />
        <SiteText>
          <SiteName>极光下载站</SiteName>
          <SiteUrl>www.xz7.com</SiteUrl>
        </SiteText>
      </SiteMark>
    </Window>
  );
};

export default App;
